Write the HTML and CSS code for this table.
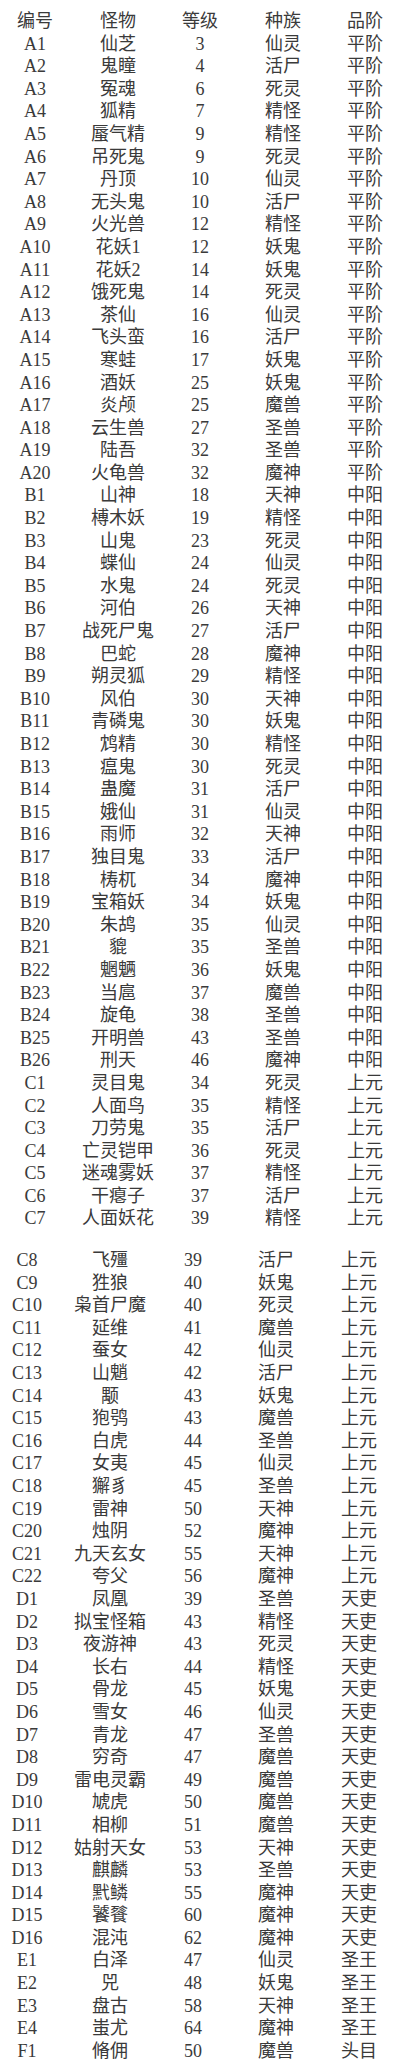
FILE: index.html
```html
<!DOCTYPE html>
<html lang="zh-CN">
<head>
<meta charset="utf-8">
<title>怪物表</title>
<link rel="stylesheet" href="styles.css">
</head>
<body>
<div class="sheet top">
  <div class="row head"><span>编号</span><span>怪物</span><span>等级</span><span>种族</span><span>品阶</span></div>
  <div class="row"><span>A1</span><span>仙芝</span><span>3</span><span>仙灵</span><span>平阶</span></div>
  <div class="row"><span>A2</span><span>鬼瞳</span><span>4</span><span>活尸</span><span>平阶</span></div>
  <div class="row"><span>A3</span><span>冤魂</span><span>6</span><span>死灵</span><span>平阶</span></div>
  <div class="row"><span>A4</span><span>狐精</span><span>7</span><span>精怪</span><span>平阶</span></div>
  <div class="row"><span>A5</span><span>蜃气精</span><span>9</span><span>精怪</span><span>平阶</span></div>
  <div class="row"><span>A6</span><span>吊死鬼</span><span>9</span><span>死灵</span><span>平阶</span></div>
  <div class="row"><span>A7</span><span>丹顶</span><span>10</span><span>仙灵</span><span>平阶</span></div>
  <div class="row"><span>A8</span><span>无头鬼</span><span>10</span><span>活尸</span><span>平阶</span></div>
  <div class="row"><span>A9</span><span>火光兽</span><span>12</span><span>精怪</span><span>平阶</span></div>
  <div class="row"><span>A10</span><span>花妖1</span><span>12</span><span>妖鬼</span><span>平阶</span></div>
  <div class="row"><span>A11</span><span>花妖2</span><span>14</span><span>妖鬼</span><span>平阶</span></div>
  <div class="row"><span>A12</span><span>饿死鬼</span><span>14</span><span>死灵</span><span>平阶</span></div>
  <div class="row"><span>A13</span><span>茶仙</span><span>16</span><span>仙灵</span><span>平阶</span></div>
  <div class="row"><span>A14</span><span>飞头蛮</span><span>16</span><span>活尸</span><span>平阶</span></div>
  <div class="row"><span>A15</span><span>寒蛙</span><span>17</span><span>妖鬼</span><span>平阶</span></div>
  <div class="row"><span>A16</span><span>酒妖</span><span>25</span><span>妖鬼</span><span>平阶</span></div>
  <div class="row"><span>A17</span><span>炎颅</span><span>25</span><span>魔兽</span><span>平阶</span></div>
  <div class="row"><span>A18</span><span>云生兽</span><span>27</span><span>圣兽</span><span>平阶</span></div>
  <div class="row"><span>A19</span><span>陆吾</span><span>32</span><span>圣兽</span><span>平阶</span></div>
  <div class="row"><span>A20</span><span>火龟兽</span><span>32</span><span>魔神</span><span>平阶</span></div>
  <div class="row"><span>B1</span><span>山神</span><span>18</span><span>天神</span><span>中阳</span></div>
  <div class="row"><span>B2</span><span>榑木妖</span><span>19</span><span>精怪</span><span>中阳</span></div>
  <div class="row"><span>B3</span><span>山鬼</span><span>23</span><span>死灵</span><span>中阳</span></div>
  <div class="row"><span>B4</span><span>蝶仙</span><span>24</span><span>仙灵</span><span>中阳</span></div>
  <div class="row"><span>B5</span><span>水鬼</span><span>24</span><span>死灵</span><span>中阳</span></div>
  <div class="row"><span>B6</span><span>河伯</span><span>26</span><span>天神</span><span>中阳</span></div>
  <div class="row"><span>B7</span><span>战死尸鬼</span><span>27</span><span>活尸</span><span>中阳</span></div>
  <div class="row"><span>B8</span><span>巴蛇</span><span>28</span><span>魔神</span><span>中阳</span></div>
  <div class="row"><span>B9</span><span>朔灵狐</span><span>29</span><span>精怪</span><span>中阳</span></div>
  <div class="row"><span>B10</span><span>风伯</span><span>30</span><span>天神</span><span>中阳</span></div>
  <div class="row"><span>B11</span><span>青磷鬼</span><span>30</span><span>妖鬼</span><span>中阳</span></div>
  <div class="row"><span>B12</span><span>鸩精</span><span>30</span><span>精怪</span><span>中阳</span></div>
  <div class="row"><span>B13</span><span>瘟鬼</span><span>30</span><span>死灵</span><span>中阳</span></div>
  <div class="row"><span>B14</span><span>蛊魔</span><span>31</span><span>活尸</span><span>中阳</span></div>
  <div class="row"><span>B15</span><span>娥仙</span><span>31</span><span>仙灵</span><span>中阳</span></div>
  <div class="row"><span>B16</span><span>雨师</span><span>32</span><span>天神</span><span>中阳</span></div>
  <div class="row"><span>B17</span><span>独目鬼</span><span>33</span><span>活尸</span><span>中阳</span></div>
  <div class="row"><span>B18</span><span>梼杌</span><span>34</span><span>魔神</span><span>中阳</span></div>
  <div class="row"><span>B19</span><span>宝箱妖</span><span>34</span><span>妖鬼</span><span>中阳</span></div>
  <div class="row"><span>B20</span><span>朱鸪</span><span>35</span><span>仙灵</span><span>中阳</span></div>
  <div class="row"><span>B21</span><span>貔</span><span>35</span><span>圣兽</span><span>中阳</span></div>
  <div class="row"><span>B22</span><span>魍魉</span><span>36</span><span>妖鬼</span><span>中阳</span></div>
  <div class="row"><span>B23</span><span>当扈</span><span>37</span><span>魔兽</span><span>中阳</span></div>
  <div class="row"><span>B24</span><span>旋龟</span><span>38</span><span>圣兽</span><span>中阳</span></div>
  <div class="row"><span>B25</span><span>开明兽</span><span>43</span><span>圣兽</span><span>中阳</span></div>
  <div class="row"><span>B26</span><span>刑天</span><span>46</span><span>魔神</span><span>中阳</span></div>
  <div class="row"><span>C1</span><span>灵目鬼</span><span>34</span><span>死灵</span><span>上元</span></div>
  <div class="row"><span>C2</span><span>人面鸟</span><span>35</span><span>精怪</span><span>上元</span></div>
  <div class="row"><span>C3</span><span>刀劳鬼</span><span>35</span><span>活尸</span><span>上元</span></div>
  <div class="row"><span>C4</span><span>亡灵铠甲</span><span>36</span><span>死灵</span><span>上元</span></div>
  <div class="row"><span>C5</span><span>迷魂雾妖</span><span>37</span><span>精怪</span><span>上元</span></div>
  <div class="row"><span>C6</span><span>干瘪子</span><span>37</span><span>活尸</span><span>上元</span></div>
  <div class="row"><span>C7</span><span>人面妖花</span><span>39</span><span>精怪</span><span>上元</span></div>
</div>
<div class="sheet bottom">
  <div class="row"><span>C8</span><span>飞殭</span><span>39</span><span>活尸</span><span>上元</span></div>
  <div class="row"><span>C9</span><span>狌狼</span><span>40</span><span>妖鬼</span><span>上元</span></div>
  <div class="row"><span>C10</span><span>枭首尸魔</span><span>40</span><span>死灵</span><span>上元</span></div>
  <div class="row"><span>C11</span><span>延维</span><span>41</span><span>魔兽</span><span>上元</span></div>
  <div class="row"><span>C12</span><span>蚕女</span><span>42</span><span>仙灵</span><span>上元</span></div>
  <div class="row"><span>C13</span><span>山魈</span><span>42</span><span>活尸</span><span>上元</span></div>
  <div class="row"><span>C14</span><span>颙</span><span>43</span><span>妖鬼</span><span>上元</span></div>
  <div class="row"><span>C15</span><span>狍鸮</span><span>43</span><span>魔兽</span><span>上元</span></div>
  <div class="row"><span>C16</span><span>白虎</span><span>44</span><span>圣兽</span><span>上元</span></div>
  <div class="row"><span>C17</span><span>女夷</span><span>45</span><span>仙灵</span><span>上元</span></div>
  <div class="row"><span>C18</span><span>獬豸</span><span>45</span><span>圣兽</span><span>上元</span></div>
  <div class="row"><span>C19</span><span>雷神</span><span>50</span><span>天神</span><span>上元</span></div>
  <div class="row"><span>C20</span><span>烛阴</span><span>52</span><span>魔神</span><span>上元</span></div>
  <div class="row"><span>C21</span><span>九天玄女</span><span>55</span><span>天神</span><span>上元</span></div>
  <div class="row"><span>C22</span><span>夸父</span><span>56</span><span>魔神</span><span>上元</span></div>
  <div class="row"><span>D1</span><span>凤凰</span><span>39</span><span>圣兽</span><span>天吏</span></div>
  <div class="row"><span>D2</span><span>拟宝怪箱</span><span>43</span><span>精怪</span><span>天吏</span></div>
  <div class="row"><span>D3</span><span>夜游神</span><span>43</span><span>死灵</span><span>天吏</span></div>
  <div class="row"><span>D4</span><span>长右</span><span>44</span><span>精怪</span><span>天吏</span></div>
  <div class="row"><span>D5</span><span>骨龙</span><span>45</span><span>妖鬼</span><span>天吏</span></div>
  <div class="row"><span>D6</span><span>雪女</span><span>46</span><span>仙灵</span><span>天吏</span></div>
  <div class="row"><span>D7</span><span>青龙</span><span>47</span><span>圣兽</span><span>天吏</span></div>
  <div class="row"><span>D8</span><span>穷奇</span><span>47</span><span>魔兽</span><span>天吏</span></div>
  <div class="row"><span>D9</span><span>雷电灵霸</span><span>49</span><span>魔兽</span><span>天吏</span></div>
  <div class="row"><span>D10</span><span>虓虎</span><span>50</span><span>魔兽</span><span>天吏</span></div>
  <div class="row"><span>D11</span><span>相柳</span><span>51</span><span>魔兽</span><span>天吏</span></div>
  <div class="row"><span>D12</span><span>姑射天女</span><span>53</span><span>天神</span><span>天吏</span></div>
  <div class="row"><span>D13</span><span>麒麟</span><span>53</span><span>圣兽</span><span>天吏</span></div>
  <div class="row"><span>D14</span><span>黓鳞</span><span>55</span><span>魔神</span><span>天吏</span></div>
  <div class="row"><span>D15</span><span>饕餮</span><span>60</span><span>魔神</span><span>天吏</span></div>
  <div class="row"><span>D16</span><span>混沌</span><span>62</span><span>魔神</span><span>天吏</span></div>
  <div class="row"><span>E1</span><span>白泽</span><span>47</span><span>仙灵</span><span>圣王</span></div>
  <div class="row"><span>E2</span><span>兕</span><span>48</span><span>妖鬼</span><span>圣王</span></div>
  <div class="row"><span>E3</span><span>盘古</span><span>58</span><span>天神</span><span>圣王</span></div>
  <div class="row"><span>E4</span><span>蚩尤</span><span>64</span><span>魔神</span><span>圣王</span></div>
  <div class="row"><span>F1</span><span>脩佣</span><span>50</span><span>魔兽</span><span>头目</span></div>
</div>
</body>
</html>
```
FILE: styles.css
```css
html, body {
  margin: 0;
  padding: 0;
  background: #ffffff;
}
body {
  width: 400px;
  padding-top: 10px;
  font-family: "Liberation Serif", "Noto Sans CJK SC", serif;
  font-size: 18px;
  color: #3a3a3a;
}
.sheet {
  display: flex;
  flex-direction: column;
}
.row {
  display: grid;
  height: 22.6px;
  align-items: center;
  line-height: 22.6px;
}
.row span {
  text-align: center;
  white-space: nowrap;
}
.top .row {
  grid-template-columns: 70px 96px 68px 98px 66px;
}
.bottom {
  margin-top: 19px;
}
.bottom .row {
  grid-template-columns: 54px 112px 54px 112px 54px;
}
```
